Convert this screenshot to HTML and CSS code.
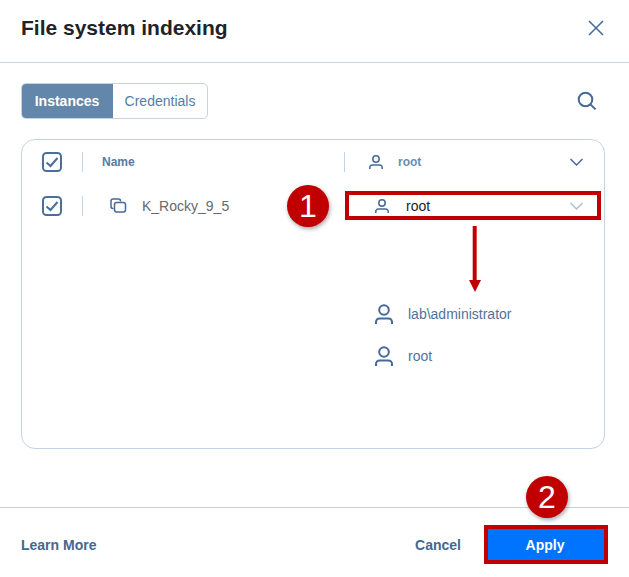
FILE: index.html
```html
<!DOCTYPE html>
<html lang="en">
<head>
<meta charset="utf-8">
<title>File system indexing</title>
<link rel="stylesheet" href="styles.css">
</head>
<body>
<div class="dialog">
  <header class="head">
    <h1 class="title">File system indexing</h1>
    <svg class="close" width="16" height="16" viewBox="0 0 16 16"><path d="M1 1l14 14M15 1L1 15"/></svg>
  </header>
  <main class="body">
    <div class="toolbar">
      <div class="tabs">
        <span class="tab tab-active">Instances</span>
        <span class="tab">Credentials</span>
      </div>
      <svg class="search" width="20" height="20" viewBox="0 0 20 20"><circle cx="8.500" cy="8.500" r="6.800"/><path d="M13.400 13.400l5.200 5"/></svg>
    </div>
    <section class="card">
      <div class="row row-head">
        <span class="check"><svg width="20" height="20" viewBox="0 0 20 20"><rect x="1" y="1" width="18" height="18" rx="3.500"/><path d="M4.500 10.500l4 3.500 7-8"/></svg></span>
        <span class="sep"></span>
        <span class="name-head">Name</span>
        <span class="sep sep-user"></span>
        <svg class="user-sm" width="14" height="14" viewBox="0 0 14 14"><circle cx="7" cy="4" r="3.200"/><path d="M.8 14v-1.500A2.500 2.500 0 0 1 3.300 10h7.400a2.500 2.500 0 0 1 2.500 2.500V14"/></svg>
        <span class="user-head">root</span>
        <svg class="chev" width="13" height="8" viewBox="0 0 13 8"><path d="M.5 1l6 6 6-6"/></svg>
      </div>
      <div class="row row-item">
        <span class="check"><svg width="20" height="20" viewBox="0 0 20 20"><rect x="1" y="1" width="18" height="18" rx="3.500"/><path d="M4.500 10.500l4 3.500 7-8"/></svg></span>
        <span class="sep"></span>
        <svg class="inst" width="17" height="16" viewBox="0 0 17 16"><path d="M3.500 10.500H3a2 2 0 0 1-2-2V3a2 2 0 0 1 2-2h5.500a2 2 0 0 1 2 2v.5"/><rect x="4.500" y="4.500" width="11" height="9.500" rx="2.200"/></svg>
        <span class="inst-name">K_Rocky_9_5</span>
        <div class="select">
          <svg class="user-sm" width="14" height="14" viewBox="0 0 14 14"><circle cx="7" cy="4" r="3.200"/><path d="M.8 14v-1.500A2.500 2.500 0 0 1 3.300 10h7.400a2.500 2.500 0 0 1 2.500 2.500V14"/></svg>
          <span class="select-val">root</span>
          <svg class="chev chev-light" width="13" height="8" viewBox="0 0 13 8"><path d="M.5 1l6 6 6-6"/></svg>
        </div>
      </div>
      <ul class="menu">
        <li class="menu-item"><svg class="user-lg" width="18" height="20" viewBox="0 0 18 20"><circle cx="9" cy="6" r="4.800"/><path d="M1 20v-2a3.500 3.500 0 0 1 3.500-3.500h9A3.500 3.500 0 0 1 17 18v2"/></svg><span>lab\administrator</span></li>
        <li class="menu-item"><svg class="user-lg" width="18" height="20" viewBox="0 0 18 20"><circle cx="9" cy="6" r="4.800"/><path d="M1 20v-2a3.500 3.500 0 0 1 3.500-3.500h9A3.500 3.500 0 0 1 17 18v2"/></svg><span>root</span></li>
      </ul>
    </section>
  </main>
  <footer class="foot">
    <a class="link">Learn More</a>
    <div class="actions">
      <a class="link">Cancel</a>
      <button class="apply">Apply</button>
    </div>
  </footer>
  <span class="badge badge-1">1</span>
  <span class="badge badge-2">2</span>
  <svg class="arrow" width="12" height="68" viewBox="0 0 12 68"><path class="arrow-line" d="M5.700 0v56"/><path class="arrow-head" d="M0 54h12l-6 12z"/></svg>
</div>
</body>
</html>
```

FILE: styles.css
```css
* { box-sizing: border-box; }
html, body { margin: 0; padding: 0; background: #fff; }
body { font-family: "Liberation Sans", Arial, sans-serif; color: #43688f; }
.dialog { position: relative; width: 629px; height: 577px; display: flex; flex-direction: column; overflow: hidden; }
svg { display: block; flex: none; fill: none; stroke: #44699a; stroke-width: 1.5; }

.head { height: 63px; padding: 0 25px 0 21px; display: flex; align-items: center; justify-content: space-between; border-bottom: 1px solid #c3d3e3; }
.title { margin: 0 0 6px; font-size: 21px; line-height: 24px; font-weight: 700; color: #1f2328; }
.close { margin-bottom: 6px; }

.body { flex: 1; padding: 20px 24px 0 21px; display: flex; flex-direction: column; }
.toolbar { display: flex; align-items: center; justify-content: space-between; height: 36px; padding-right: 8px; }
.search { stroke-width: 2; }
.tabs { display: flex; height: 36px; border: 1px solid #c3d3e3; border-radius: 5px; overflow: hidden; }
.tab { display: flex; align-items: center; justify-content: center; width: 94px; font-size: 14px; color: #557ba6; }
.tab-active { width: 92px; margin: -1px 0 -1px -1px; background: #6287ab; color: #fff; font-weight: 700; }

.card { position: relative; margin-top: 20px; height: 310px; border: 1px solid #c3d3e3; border-radius: 14px; }
.row { display: flex; align-items: center; height: 20px; }
.row-head { margin-top: 12px; padding-left: 20px; }
.row-item { margin-top: 24px; padding-left: 20px; }
.check { display: block; width: 20px; height: 20px; }
.check svg { stroke-width: 2; stroke: #4a6f9c; }
.sep { width: 1px; height: 20px; margin-left: 20px; background: #c3d3e3; }
.name-head { margin-left: 19px; width: 242px; font-size: 12px; font-weight: 700; color: #557ba6; }
.sep-user { margin-left: 0; }
.row-head .user-sm { margin-left: 24px; }
.user-head { margin-left: 15px; font-size: 12px; font-weight: 700; color: #6a8db3; }
.row-head .chev { margin-left: auto; margin-right: 21px; }
.chev-light { margin-left: auto; stroke: #a9c0d8; }

.inst { margin-left: 27px; }
.inst-name { margin-left: 15px; font-size: 14px; color: #66696e; }
.row-item .select { position: absolute; left: 323px; top: 51px; width: 256px; height: 29px; padding-left: 26px; display: flex; align-items: center; border: 4px solid #c00000; background: #fff; }
.select-val { margin-left: 17px; font-size: 14px; color: #1d1d1d; }
.select .chev { margin-right: 14px; }

.menu { position: absolute; left: 353px; top: 153px; margin: 0; padding: 0; list-style: none; }
.menu-item { display: flex; align-items: center; gap: 15px; height: 42px; font-size: 14px; color: #4f739c; }
.user-lg { stroke-width: 2; }

.foot { height: 70px; padding: 17px 21px 0; border-top: 1px solid #c3d3e3; display: flex; align-items: flex-start; justify-content: space-between; }
.link { font-size: 14px; font-weight: 700; color: #43688f; line-height: 40px; }
.actions { display: flex; gap: 23px; }
.apply { width: 124px; height: 39px; padding: 0 2px 0 0; border: 4px solid #c00000; background: #0073ff; color: #fff; font: 700 14px "Liberation Sans", Arial, sans-serif; }

.badge { position: absolute; width: 42px; height: 42px; border-radius: 50%; background: #c00000; color: #fff; display: flex; align-items: center; justify-content: center; font-size: 32px; line-height: 1; box-shadow: 1px 2px 4px rgba(0,0,0,.35); }
.badge-1 { left: 287px; top: 185px; }
.badge-2 { left: 526px; top: 476px; }
.arrow { position: absolute; left: 469px; top: 226px; stroke: none; }
.arrow-line { stroke: #c00000; stroke-width: 4; }
.arrow-head { fill: #c00000; stroke: none; }
```
